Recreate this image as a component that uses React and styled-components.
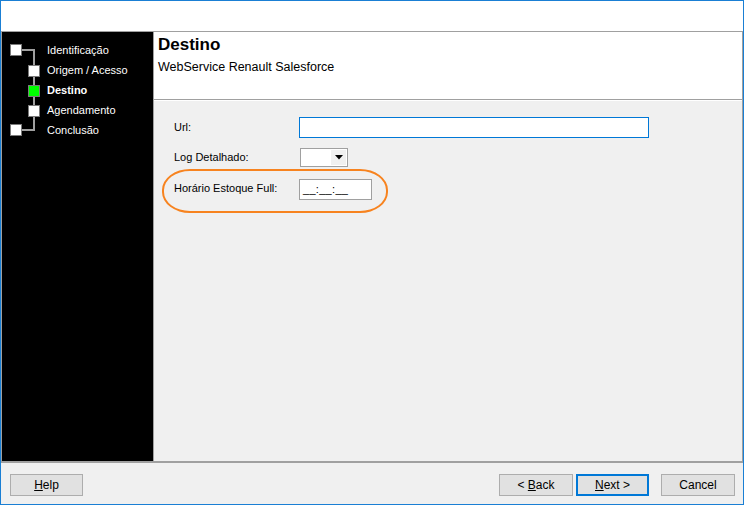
import React from 'react'
import styled, { createGlobalStyle } from 'styled-components'

const GlobalStyle = createGlobalStyle`
  html, body {
    margin: 0;
    padding: 0;
    background: #ffffff;
  }
  * {
    box-sizing: border-box;
  }
`

const Window = styled.div`
  width: 744px;
  height: 505px;
  border: 1px solid #1a7fd4;
  display: flex;
  flex-direction: column;
  background: #ffffff;
  font-family: "Liberation Sans", Arial, sans-serif;
  font-size: 11px;
  color: #000;
  overflow: hidden;
`

const TitleSpace = styled.div`
  height: 30px;
  background: #ffffff;
`

const Frame = styled.div`
  height: 430px;
  display: flex;
  border-top: 1px solid #a0a0a0;
  border-left: 1px solid #a0a0a0;
`

const SidePanel = styled.div`
  width: 152px;
  background: #000000;
  border-right: 1px solid #a0a0a0;
  padding-top: 8px;
  display: flex;
  align-items: flex-start;
`

const TreeLines = styled.svg`
  flex: none;
  display: block;
`

const TreeLabels = styled.div`
  display: flex;
  flex-direction: column;
`

const TreeLabel = styled.div`
  height: 20px;
  line-height: 20px;
  color: #ffffff;
  font-size: 11px;
  font-weight: ${p => (p.$active ? 'bold' : 'normal')};
  white-space: nowrap;
`

const Main = styled.div`
  flex: 1;
  display: flex;
  flex-direction: column;
  border-right: 1px solid #a0a0a0;
`

const Header = styled.div`
  height: 68px;
  background: #ffffff;
  border-bottom: 1px solid #a0a0a0;
  padding: 3px 0 0 4px;
  display: flex;
  flex-direction: column;
  gap: 4px;
`

const Title = styled.div`
  font-size: 17px;
  font-weight: bold;
  line-height: 20px;
`

const Subtitle = styled.div`
  font-size: 12.5px;
  line-height: 16px;
`

const Body = styled.div`
  flex: 1;
  background: #f0f0f0;
  border-top: 1px solid #ffffff;
  padding: 11px 0 0 20px;
  display: flex;
  flex-direction: column;
`

const Row = styled.div`
  position: relative;
  display: flex;
  align-items: center;
  height: 30px;
  margin-top: ${p => p.$offset || 0}px;
`

const Label = styled.div`
  width: 125px;
  flex: none;
  font-size: 11px;
  margin-top: ${p => p.$shift || 0}px;
`

const TextBox = styled.div`
  width: ${p => p.$w}px;
  height: ${p => p.$h}px;
  background: #ffffff;
  border: 1px solid ${p => (p.$focused ? '#0078d7' : '#a0a0a0')};
  font-size: 11px;
  padding-left: 3px;
  display: flex;
  align-items: center;
  letter-spacing: 0.3px;
`

const Combo = styled.div`
  width: 48px;
  height: 19px;
  margin-left: 1px;
  background: #ffffff;
  border: 1px solid #a0a0a0;
  display: flex;
  justify-content: flex-end;
  padding: 1px;
`

const ComboButton = styled.div`
  width: 15px;
  background: #f0f0f0;
  display: flex;
  align-items: center;
  justify-content: center;
`

const Highlight = styled.div`
  position: absolute;
  left: -12px;
  top: -5px;
  width: 226px;
  height: 44px;
  border: 2px solid #f7831f;
  border-radius: 28px / 21px;
  pointer-events: none;
`

const Separator = styled.div`
  height: 2px;
  background: #a0a0a0;
`

const Footer = styled.div`
  flex: 1;
  background: #f0f0f0;
  display: flex;
  align-items: flex-start;
  padding: 11px 8px 0 9px;
`

const Spacer = styled.div`
  flex: 1;
`

const Button = styled.div`
  width: ${p => p.$w || 73}px;
  height: 22px;
  margin-left: ${p => p.$ml || 0}px;
  background: #e1e1e1;
  border: ${p => (p.$default ? '2px solid #0078d7' : '1px solid #adadad')};
  display: flex;
  align-items: center;
  justify-content: center;
  font-size: 12px;
  color: #000;
`

const steps = [
  { name: 'Identificação' },
  { name: 'Origem / Acesso' },
  { name: 'Destino', active: true },
  { name: 'Agendamento' },
  { name: 'Conclusão' }
]

function StepTree() {
  return (
    <>
      <TreeLines width="45" height="100" viewBox="0 0 45 100">
        <path d="M19 10 H32 V90 H19" fill="none" stroke="#a0a0a0" strokeWidth="2" />
        <rect x="8.5" y="4.5" width="11" height="11" fill="#fff" stroke="#7a7a7a" />
        <rect x="26.5" y="25.5" width="11" height="11" fill="#fff" stroke="#7a7a7a" />
        <rect x="26.5" y="45.5" width="11" height="11" fill="#00ff00" stroke="#7a7a7a" />
        <rect x="26.5" y="65.5" width="11" height="11" fill="#fff" stroke="#7a7a7a" />
        <rect x="8.5" y="84.5" width="11" height="11" fill="#fff" stroke="#7a7a7a" />
      </TreeLines>
      <TreeLabels>
        {steps.map(step => (
          <TreeLabel key={step.name} $active={step.active}>{step.name}</TreeLabel>
        ))}
      </TreeLabels>
    </>
  )
}

export default function App() {
  return (
    <Window>
      <GlobalStyle />
      <TitleSpace />
      <Frame>
        <SidePanel>
          <StepTree />
        </SidePanel>
        <Main>
          <Header>
            <Title>Destino</Title>
            <Subtitle>WebService Renault Salesforce</Subtitle>
          </Header>
          <Body>
            <Row>
              <Label>Url:</Label>
              <TextBox $w={350} $h={21} $focused />
            </Row>
            <Row>
              <Label>Log Detalhado:</Label>
              <Combo>
                <ComboButton>
                  <svg width="8" height="5" viewBox="0 0 8 5">
                    <path d="M0 0 H8 L4 4.5 Z" fill="#000" />
                  </svg>
                </ComboButton>
              </Combo>
            </Row>
            <Row $offset={2}>
              <Highlight />
              <Label $shift={-3}>Horário Estoque Full:</Label>
              <TextBox $w={73} $h={21}>__:__:__</TextBox>
            </Row>
          </Body>
        </Main>
      </Frame>
      <Separator />
      <Footer>
        <Button $w={73}><span><u>H</u>elp</span></Button>
        <Spacer />
        <Button $w={74}><span>&lt; <u>B</u>ack</span></Button>
        <Button $w={73} $ml={3} $default><span><u>N</u>ext &gt;</span></Button>
        <Button $w={74} $ml={12}>Cancel</Button>
      </Footer>
    </Window>
  )
}
